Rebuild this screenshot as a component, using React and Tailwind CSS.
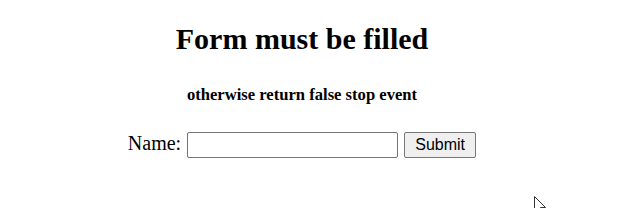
import React, { useState } from 'react';

export default function App() {
  const [name, setName] = useState('');

  const handleSubmit = (e) => {
    if (name.trim() === '') {
      e.preventDefault();
      return false;
    }
    return true;
  };

  return (
    <div className="relative h-[208px] w-[635px] overflow-hidden bg-white text-black">
      <div className="w-[604px] pt-[22px] text-center font-['Liberation_Serif','Times_New_Roman',serif]">
        <h2 className="text-[30px] font-bold leading-[34.5px]">Form must be filled</h2>
        <h5 className="mt-[28px] text-[16.6px] font-bold leading-[19px]">
          otherwise return false stop event
        </h5>
        <form onSubmit={handleSubmit} className="mt-[28px] flex items-center justify-center">
          <label htmlFor="name" className="mt-[-3px] text-[20px] leading-[23px]">
            Name:
          </label>
          <input
            id="name"
            type="text"
            value={name}
            onChange={(e) => setName(e.target.value)}
            className="ml-[6px] h-[26px] w-[211px] rounded-[2px] border border-[#767676] bg-white px-[2px] text-[16px] outline-none"
          />
          <button
            type="submit"
            className="ml-[6px] h-[26px] w-[72px] rounded-[2px] border border-[#767676] bg-[#efefef] font-['Liberation_Sans',Arial,sans-serif] text-[16px] leading-none"
          >
            Submit
          </button>
        </form>
      </div>
      <svg
        className="absolute left-[534px] top-[196px]"
        width="14"
        height="20"
        viewBox="0 0 14 20"
      >
        <path d="M0.5 0.5 L0.5 16 L4 12.5 L6.5 18.5 L9 17.5 L6.5 11.5 L11.5 11.5 Z" fill="#fff" stroke="#333" strokeWidth="1" />
      </svg>
    </div>
  );
}
